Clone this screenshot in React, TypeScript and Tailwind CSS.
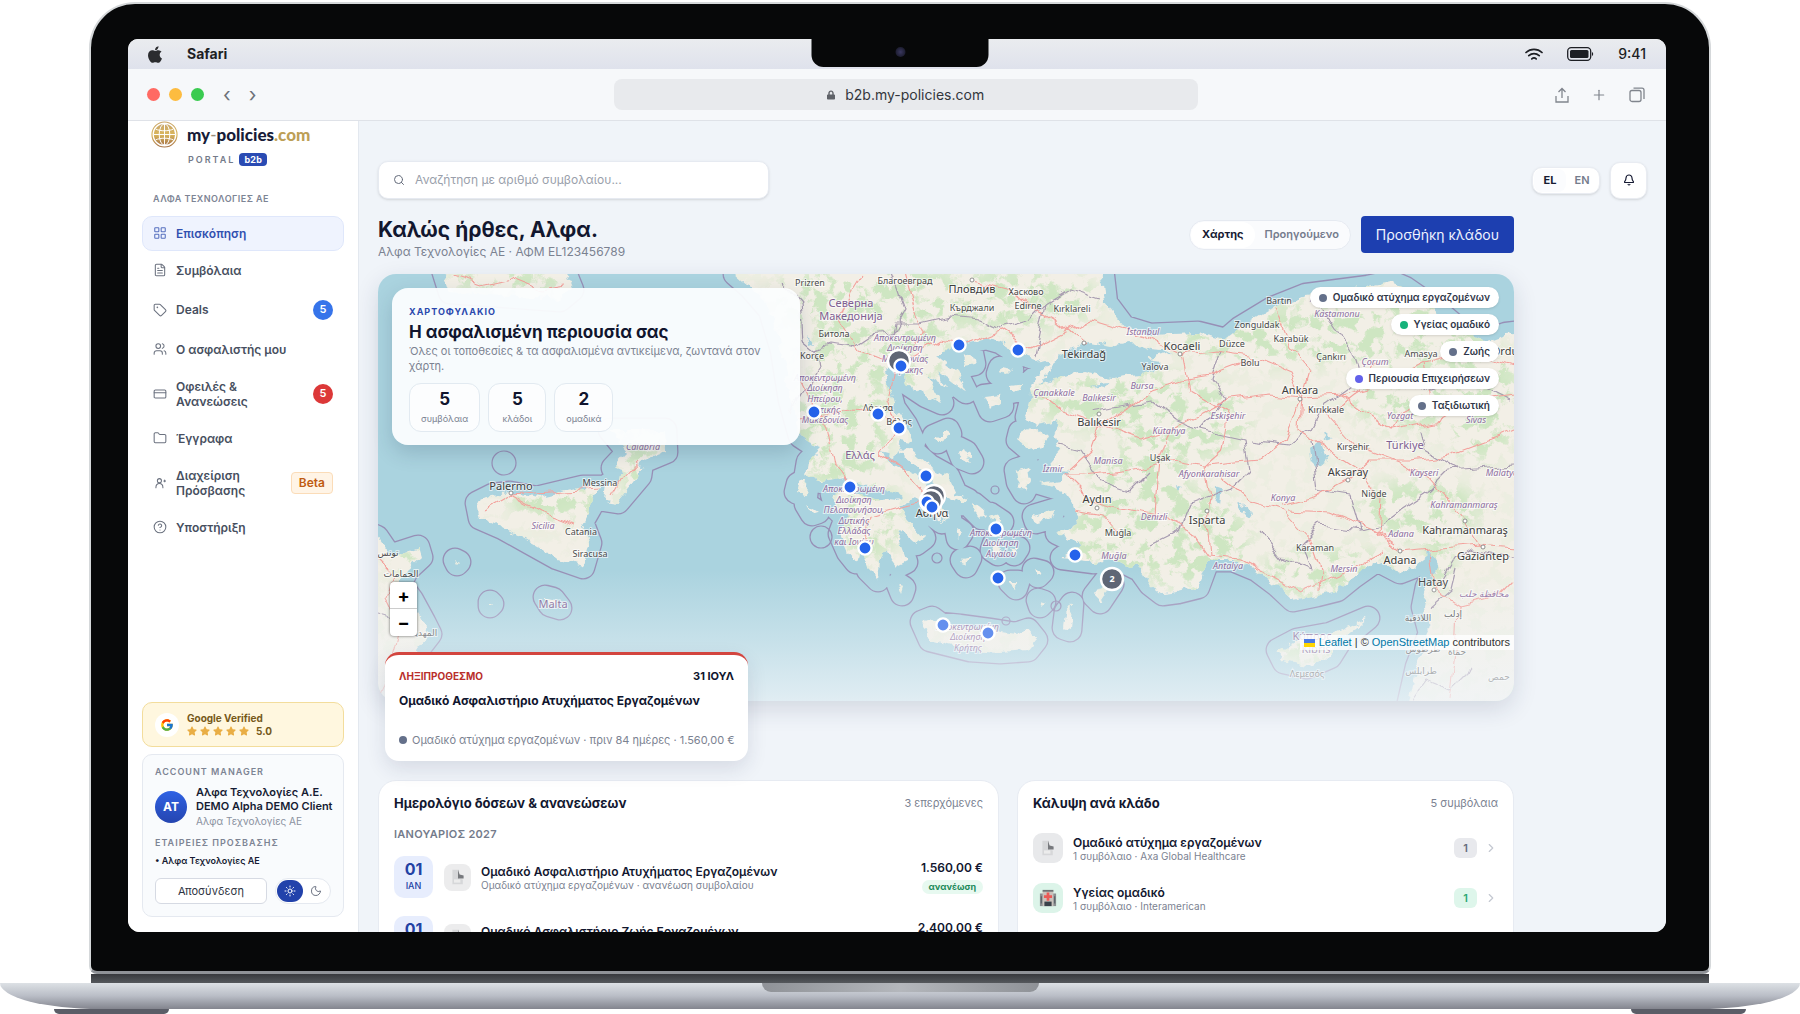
import React from 'react';
import {
  Bell,
  ChevronRight,
  Copy,
  CreditCard,
  FileText,
  Folder,
  HelpCircle,
  LayoutGrid,
  Moon,
  Plus,
  Search,
  Sun,
  Tag,
  Users,
} from 'lucide-react';
import { FaApple, FaLock, FaStar } from 'react-icons/fa';
import { FcGoogle } from 'react-icons/fc';

/* ---------- map data ---------- */

const LAND = [
  // Balkans, Greece mainland and Peloponnese, joined with Anatolia
  'M735 274 L750 287 L770 310 L782 350 L790 400 L800 436 L812 444 L822 448 L808 462 L806 474 L822 482 L846 478 L862 486 L884 492 L900 498 L880 500 L860 494 L846 488 L832 494 L836 508 L846 518 L840 534 L848 552 L856 562 L860 548 L868 570 L878 580 L880 560 L886 550 L898 566 L906 562 L898 540 L900 530 L916 544 L924 538 L906 518 L902 506 L914 498 L926 510 L942 522 L950 518 L940 500 L932 488 L916 476 L904 470 L888 460 L880 452 L896 456 L900 440 L914 442 L906 425 L894 408 L888 385 L886 368 L896 364 L904 372 L908 384 L926 396 L942 403 L932 386 L926 376 L946 388 L938 370 L966 392 L956 372 L936 356 L948 348 L968 342 L986 338 L1000 342 L1016 352 L1040 360 L1048 366 L1030 382 L1032 397 L1027 417 L1034 424 L1058 420 L1054 437 L1060 452 L1047 467 L1067 472 L1062 480 L1040 483 L1063 490 L1073 503 L1077 523 L1057 533 L1082 545 L1062 558 L1093 562 L1120 560 L1140 570 L1150 584 L1163 594 L1178 592 L1198 587 L1208 560 L1233 560 L1257 570 L1277 585 L1293 600 L1317 595 L1337 590 L1353 577 L1377 560 L1400 572 L1413 567 L1430 552 L1438 566 L1427 587 L1423 607 L1430 633 L1417 667 L1405 720 L1540 720 L1540 330 L1506 334 L1484 342 L1460 330 L1434 308 L1405 288 L1391 282 L1368 287 L1306 295 L1273 308 L1240 328 L1226 340 L1198 333 L1150 335 L1124 327 L1106 303 L1100 250 L735 250 Z',
  // Tunisia
  'M360 530 L377 537 L390 556 L418 547 L421 557 L407 570 L400 584 L412 600 L424 622 L430 634 L416 652 L420 680 L400 720 L360 720 Z',
  // Sicily
  'M477 503 L493 495 L510 493 L537 498 L583 487 L601 487 L590 508 L582 522 L590 543 L583 567 L557 558 L530 543 L503 528 L480 518 Z',
  // Calabria and southern Italy
  'M610 430 L665 430 L666 452 L642 462 L640 476 L618 502 L605 500 L607 486 L624 473 L613 468 L628 452 Z',
  'M440 260 L560 260 L572 290 L560 300 L450 292 Z',
  // Malta
  'M545 597 L553 599 L560 608 L550 605 Z',
  // Crete
  'M922 622 L932 618 L940 624 L960 626 L990 630 L1016 634 L1028 630 L1036 640 L1028 650 L1000 652 L970 650 L930 640 Z',
  // Cyprus
  'M1278 650 L1297 640 L1330 634 L1368 618 L1340 641 L1330 657 L1307 667 L1284 662 Z',
  // Evia
  'M898 448 L912 450 L930 466 L948 476 L956 494 L968 500 L962 504 L944 494 L926 474 L904 458 Z',
  // Lesvos, Chios, Limnos, Samos
  'M1020 432 L1034 426 L1048 438 L1044 446 L1030 450 L1018 440 Z',
  'M1016 470 L1028 466 L1030 480 L1024 492 L1018 482 Z',
  'M984 396 L1000 394 L1002 406 L990 410 Z',
  'M1034 516 L1054 510 L1050 518 L1036 522 Z',
  // Thasos, Samothraki, Imbros
  'M962 356 L972 354 L974 364 L964 366 Z',
  'M1000 368 L1012 370 L1006 376 L998 374 Z',
  'M1010 386 L1022 384 L1020 390 L1010 392 Z',
  // Skyros, Sporades, Cyclades
  'M958 448 L966 452 L972 462 L962 458 Z',
  'M934 436 L948 430 L950 434 L938 442 Z',
  'M974 504 L986 514 L982 518 L972 508 Z',
  'M990 514 L1002 522 L998 526 L988 518 Z',
  'M994 544 L1002 546 L998 554 L992 550 Z',
  'M1010 546 L1018 548 L1014 554 Z',
  'M956 528 L962 532 L958 538 Z',
  'M962 560 L970 558 L966 566 Z',
  'M1034 570 L1042 572 L1038 576 Z',
  'M1010 582 L1018 582 L1016 588 Z',
  // Rhodes, Karpathos, Kos
  'M1094 596 L1108 578 L1112 584 L1100 602 Z',
  'M1066 612 L1072 604 L1070 630 L1064 628 Z',
  'M1038 600 L1044 602 L1040 606 Z',
  // Ionian islands, Kythira
  'M798 484 L808 478 L806 496 L796 492 Z',
  'M806 504 L818 512 L812 514 Z',
  'M898 584 L904 588 L902 594 Z',
  'M455 560 L459 562 L457 564 Z',
  'M490 602 L492 604 L490 606 Z',
].join(' ');

const WATER = [
  // Sea of Marmara
  'M1052 364 L1070 348 L1090 342 L1110 346 L1130 342 L1150 350 L1174 352 L1150 358 L1160 370 L1140 374 L1112 378 L1084 372 L1054 378 L1040 384 Z',
  // Gulf of Corinth
  'M838 483 L856 486 L880 488 L902 496 L898 500 L878 498 L856 492 Z',
  // lakes
  'M1310 450 L1320 442 L1326 462 L1318 468 L1312 462 Z',
  'M1216 486 L1222 488 L1220 504 L1216 498 Z',
  'M1240 502 L1252 512 L1248 518 L1242 510 Z',
  'M1324 432 L1332 438 L1326 440 Z',
  'M806 334 L814 346 L808 348 Z',
  'M1176 486 L1184 488 L1178 492 Z',
  'M1090 384 L1108 382 L1104 388 Z',
].join(' ');

const ROADS = [
  'M900 364 L940 340 L965 344 L1000 330 L1030 350 L1060 335 L1090 320 L1146 337 L1183 355 L1215 350 L1250 355 L1290 372 L1302 398 L1340 396 L1380 385 L1424 362 L1470 350 L1514 365',
  'M1302 398 L1285 440 L1260 460 L1205 465 L1175 460 L1130 470 L1085 475 L1065 475',
  'M1302 398 L1300 430 L1330 450 L1360 470 L1380 500 L1378 535 L1400 552 L1440 548 L1480 545 L1514 548',
  'M1065 475 L1090 500 L1120 508 L1160 515 L1190 530 L1207 555 L1240 558 L1270 575 L1300 592 L1350 570 L1385 552',
  'M895 368 L888 400 L898 425 L880 455 L915 480 L932 500 L905 505 L870 515 L862 545',
  'M850 487 L835 465 L828 430 L815 410 L800 380',
  'M800 418 L850 412 L878 414 L898 425',
  'M895 364 L860 350 L840 320 L850 290 L860 274',
  'M905 274 L915 310 L925 335 L900 362',
  'M972 280 L1010 290 L1028 305 L1055 320 L1085 345',
  'M1040 394 L1060 410 L1099 425 L1130 405 L1150 390 L1180 380 L1210 375 L1250 360',
  'M1099 425 L1090 450 L1068 470',
  'M1099 425 L1140 440 L1170 430 L1228 400 L1270 395 L1302 398',
  'M1205 465 L1210 500 L1207 520 L1210 555',
  'M1283 510 L1250 500 L1220 475',
  'M1283 510 L1310 540 L1320 570 L1318 592',
  'M1283 505 L1320 495 L1348 480 L1370 460 L1410 460 L1450 455 L1490 440 L1514 430',
  'M1288 510 L1330 512 L1370 528 L1395 545',
  'M1328 415 L1355 445 L1400 462 L1430 480 L1465 520 L1480 545',
  'M1340 396 L1390 430 L1440 420 L1476 400 L1514 395',
  'M1430 552 L1435 590 L1458 605 L1456 650 L1450 701',
  'M1458 605 L1500 595 L1514 580',
  'M1276 310 L1290 345 L1310 370 L1302 398',
  'M1183 355 L1190 390 L1228 412 L1222 450 L1205 465',
  'M1375 362 L1360 390 L1328 415',
  'M1424 362 L1430 400 L1400 415 L1390 430',
  'M1118 536 L1100 515 L1075 510',
  'M1170 430 L1160 460 L1155 515',
  'M510 495 L540 512 L575 525',
  'M484 510 L510 495 L550 492 L600 489',
  'M640 460 L622 480 L612 498',
  'M377 560 L392 575 L385 600 L400 630 L392 660 L380 700',
  'M452 276 L480 285 L510 278 L540 290 L566 286',
];

const BORDERS = [
  'M782 280 L800 300 L803 340 L815 350 L830 345 L852 348 L870 336 L892 334 L894 322 L920 322 L950 315 L980 318 L1000 328 L1030 320 L1045 305 L1070 290 L1100 300',
  'M892 334 L905 310 L898 290 L892 274',
  'M815 350 L818 370 L800 395 L792 410',
  'M1045 305 L1040 330 L1034 358',
  'M1220 350 L1210 380 L1225 400 L1200 430 L1175 420 L1150 400 L1120 405 L1090 410',
  'M1200 430 L1245 440 L1250 470 L1230 490 L1190 505 L1180 530 L1150 545',
  'M1250 440 L1290 445 L1312 430 L1325 405 L1360 380 L1350 350 L1330 320 L1310 300',
  'M1360 380 L1390 375 L1430 390 L1470 380 L1510 400',
  'M1312 440 L1318 490 L1350 495 L1360 530 L1380 525 L1400 510 L1430 490 L1450 470 L1514 465',
  'M1260 530 L1285 560 L1310 570 L1300 545 L1320 525 L1360 530',
  'M1440 585 L1455 560 L1470 550 L1514 558',
  'M1430 607 L1450 590 L1455 570',
  'M1150 470 L1130 490 L1100 480 L1080 450 L1060 445',
  'M1420 430 L1425 450 L1460 470',
  'M377 615 L395 620 L405 600',
  'M1410 701 L1425 680 L1450 690 L1470 670',
];

// t = town, c = city, r = region (italic), n = country
type LabelKind = 't' | 'c' | 'r' | 'n';
const LABELS: [string, number, number, LabelKind][] = [
  ['Prizren', 810, 286, 't'], ['Благоевград', 905, 284, 't'], ['Пловдив', 972, 293, 'c'],
  ['Хасково', 1026, 295, 't'], ['Северна', 851, 307, 'n'], ['Македонија', 851, 320, 'n'],
  ['Кърджали', 972, 311, 't'], ['Edirne', 1028, 309, 't'], ['Kırklareli', 1072, 312, 't'],
  ['Битола', 834, 337, 't'], ['Αποκεντρωμένη', 905, 341, 'r'], ['Διοίκηση', 905, 351, 'r'],
  ['Μακεδονίας', 905, 362, 'r'], ['Θράκης', 908, 373, 'r'], ['İstanbul', 1143, 335, 'r'],
  ['Korçe', 812, 359, 't'], ['Tekirdağ', 1084, 358, 'c'], ['Kocaeli', 1182, 350, 'c'],
  ['Yalova', 1155, 370, 't'], ['Αποκεντρωμένη', 825, 381, 'r'], ['Διοίκηση', 825, 391, 'r'],
  ['Ηπείρου,', 825, 402, 'r'], ['Δυτικής', 825, 413, 'r'], ['Μακεδονίας', 825, 423, 'r'],
  ['Bursa', 1142, 389, 'r'], ['Çanakkale', 1054, 396, 'r'], ['Balıkesir', 1099, 401, 'r'],
  ['Balıkesir', 1099, 426, 'c'], ['Λάρισα', 878, 411, 't'], ['Βόλος', 899, 425, 't'],
  ['Kütahya', 1169, 434, 'r'], ['Ελλάς', 860, 459, 'n'], ['Manisa', 1108, 464, 'r'],
  ['Uşak', 1160, 461, 't'], ['İzmir', 1053, 472, 'r'], ['Αποκεντρωμένη', 854, 492, 'r'],
  ['Διοίκηση', 854, 503, 'r'], ['Πελοποννήσου,', 854, 513, 'r'], ['Δυτικής', 854, 524, 'r'],
  ['Ελλάδας', 854, 534, 'r'], ['και Ιονίου', 854, 545, 'r'], ['Aydın', 1097, 503, 'c'],
  ['Αθήνα', 932, 517, 'c'], ['Denizli', 1154, 520, 'r'], ['Muğla', 1118, 536, 't'],
  ['Muğla', 1114, 559, 'r'], ['Αποκεντρωμένη', 1001, 536, 'r'], ['Διοίκηση', 1001, 546, 'r'],
  ['Αιγαίου', 1001, 557, 'r'], ['Αποκεντρωμένη', 968, 630, 'r'], ['Διοίκηση', 968, 640, 'r'],
  ['Κρήτης', 968, 651, 'r'], ['Bartın', 1279, 304, 't'], ['Kastamonu', 1337, 317, 'r'],
  ['Zonguldak', 1257, 328, 't'], ['Karabük', 1291, 342, 't'], ['Düzce', 1232, 347, 't'],
  ['Bolu', 1250, 366, 't'], ['Çankırı', 1331, 360, 't'], ['Çorum', 1375, 365, 'r'],
  ['Amasya', 1421, 357, 't'], ['Ordu', 1505, 355, 'c'], ['Ankara', 1300, 394, 'c'],
  ['Kırıkkale', 1326, 413, 't'], ['Eskişehir', 1228, 419, 'r'], ['Yozgat', 1400, 419, 'r'],
  ['Sivas', 1476, 423, 'r'], ['Kırşehir', 1353, 450, 't'], ['Türkiye', 1405, 449, 'n'],
  ['Aksaray', 1348, 476, 'c'], ['Afyonkarahisar', 1209, 477, 'r'], ['Kayseri', 1424, 476, 'r'],
  ['Malatya', 1502, 476, 'r'], ['Niğde', 1374, 497, 't'], ['Konya', 1283, 501, 'r'],
  ['Kahramanmaraş', 1464, 508, 'r'], ['Isparta', 1207, 524, 'c'], ['Adana', 1401, 537, 'r'],
  ['Kahramanmaraş', 1465, 534, 'c'], ['Gaziantep', 1483, 560, 'c'], ['Karaman', 1315, 551, 't'],
  ['Adana', 1400, 564, 'c'], ['Antalya', 1228, 569, 'r'], ['Mersin', 1344, 572, 'r'],
  ['Hatay', 1433, 586, 'c'], ['محافظة حلب', 1484, 597, 'r'], ['إدلب', 1453, 617, 't'],
  ['اللاذقية', 1418, 621, 't'], ['طرطوس', 1423, 652, 't'], ['حماة', 1457, 655, 't'],
  ['طرابلس', 1421, 674, 't'], ['حمص', 1499, 680, 't'], ['Κύπρος', 1312, 640, 'n'],
  ['Kıbrıs', 1316, 653, 'n'], ['Λεμεσός', 1307, 677, 't'], ['Palermo', 511, 490, 'c'],
  ['Messina', 600, 486, 't'], ['Calabria', 643, 450, 'r'], ['Sicilia', 543, 529, 'r'],
  ['Catania', 581, 535, 't'], ['Siracusa', 590, 557, 't'], ['Malta', 553, 608, 'n'],
  ['تونس', 388, 556, 't'], ['الحمامات', 401, 577, 't'], ['المهدية', 424, 636, 't'],
];

const labelStyle: Record<LabelKind, string> = {
  t: 'fill-[#4a4a4a] text-[9px]',
  c: 'fill-[#3d3d3d] text-[11px]',
  r: 'fill-[#8d6ea0] text-[9px] italic',
  n: 'fill-[#7f5f92] text-[11px]',
};

// greener areas: cx, cy, rx, ry
const FORESTS = [
  [880, 300, 110, 36], [1010, 300, 90, 30], [880, 350, 70, 40], [840, 430, 50, 60],
  [870, 520, 30, 40], [1280, 335, 110, 30], [1120, 400, 90, 30], [1180, 420, 70, 40],
  [1190, 540, 60, 50], [1115, 540, 50, 40], [1330, 575, 70, 26], [1420, 510, 60, 30],
  [1400, 330, 80, 40], [1410, 400, 60, 30], [1140, 480, 50, 30], [560, 500, 50, 20],
  [640, 470, 20, 30], [510, 280, 60, 16], [1440, 560, 14, 30], [1310, 650, 30, 12],
  [1480, 400, 40, 60], [410, 560, 14, 20],
];

const TOWN_DOTS = [
  [972, 280], [1084, 343], [1180, 354], [1099, 414], [1097, 508], [1348, 480], [1207, 511],
  [1400, 551], [1465, 521], [1483, 547], [1434, 590], [511, 493], [1300, 399],
];

const PINS = [
  [959, 345], [1018, 350], [814, 412], [878, 414], [899, 428], [926, 476], [850, 487],
  [865, 548], [996, 529], [998, 578], [1075, 555],
];

const WorldMap = () => (
  <svg
    className="absolute inset-0 h-full w-full font-['Noto_Sans','DejaVu_Sans',sans-serif]"
    viewBox="378 274 1136 427"
    preserveAspectRatio="xMidYMid slice"
    role="img"
    aria-label="Χάρτης"
  >
    <defs>
      <filter id="rough" x="0" y="0" width="1" height="1">
        <feTurbulence type="fractalNoise" baseFrequency="0.09" numOctaves="3" seed="4" result="n" />
        <feDisplacementMap in="SourceGraphic" in2="n" scale="11" xChannelSelector="R" yChannelSelector="G" />
      </filter>
      <filter id="wavy" x="0" y="0" width="1" height="1">
        <feTurbulence type="fractalNoise" baseFrequency="0.045" numOctaves="2" seed="7" result="n" />
        <feDisplacementMap in="SourceGraphic" in2="n" scale="14" xChannelSelector="R" yChannelSelector="G" />
      </filter>
      <filter id="wood" x="0" y="0" width="1" height="1">
        <feTurbulence type="fractalNoise" baseFrequency="0.07" numOctaves="4" seed="11" />
        <feColorMatrix values="0 0 0 0 0.62  0 0 0 0 0.79  0 0 0 0 0.54  9 0 0 0 -4.4" />
      </filter>
      <filter id="soft"><feGaussianBlur stdDeviation="8" /></filter>
      <clipPath id="land"><path d={LAND} /></clipPath>
      <mask id="forests" maskUnits="userSpaceOnUse" x="370" y="260" width="1160" height="450">
        <rect x="370" y="260" width="1160" height="450" fill="#222" />
        <g filter="url(#soft)" fill="#fff">
          {FORESTS.map(([cx, cy, rx, ry], i) => <ellipse key={i} cx={cx} cy={cy} rx={rx} ry={ry} />)}
        </g>
      </mask>
      <linearGradient id="fade" x1="0" y1="0" x2="0" y2="1">
        <stop offset="0" stopColor="#f1f5f9" stopOpacity="0" />
        <stop offset="0.55" stopColor="#f1f5f9" stopOpacity="0.44" />
        <stop offset="1" stopColor="#f1f5f9" stopOpacity="0.82" />
      </linearGradient>
    </defs>
    <rect x="0" y="0" width="2000" height="1014" fill="#aad3df" />
    {/* territorial waters: a wide outline with a slightly narrower one on top */}
    <g fill="none" strokeLinejoin="round">
      <path d={LAND} stroke="#978fb6" strokeWidth="25" />
      <path d={LAND} stroke="#aad3df" strokeWidth="22.4" />
    </g>
    <g filter="url(#rough)">
      <path d="M340 240 H1560 V740 H340 Z" fill="none" />
      <path d={LAND} fill="#f2efe6" />
      <g clipPath="url(#land)">
        <g mask="url(#forests)">
          <rect x="370" y="260" width="1160" height="450" filter="url(#wood)" />
        </g>
      </g>
      <path d={WATER} fill="#aad3df" />
    </g>
    <g filter="url(#wavy)" fill="none" strokeLinejoin="round">
      <path d="M340 240 H1560 V740 H340 Z" />
      {BORDERS.map((d, i) => <path key={i} d={d} stroke="#a79bb0" strokeWidth="1.2" />)}
      {ROADS.map((d, i) => <path key={i} d={d} stroke="#f3a19c" strokeWidth="1.1" />)}
    </g>
    <g fill="none" stroke="#978fb6" strokeWidth="1.2">
      <circle cx="504" cy="463" r="12" />
      <circle cx="821" cy="537" r="11" />
      <circle cx="995" cy="490" r="4" />
      <circle cx="1056" cy="606" r="5" />
      <circle cx="1006" cy="621" r="4" />
      <circle cx="937" cy="558" r="5" />
    </g>
    {LABELS.map(([text, x, y, kind], i) => (
      <text
        key={i}
        x={x}
        y={y}
        textAnchor="middle"
        stroke="#ffffff"
        strokeOpacity="0.65"
        strokeWidth="2"
        paintOrder="stroke"
        className={labelStyle[kind]}
      >
        {text}
      </text>
    ))}
    {TOWN_DOTS.map(([cx, cy]) => (
      <circle key={`${cx}-${cy}`} cx={cx} cy={cy} r="2" fill="#fff" stroke="#777" strokeWidth="0.8" />
    ))}
    <rect x="370" y="570" width="1160" height="140" fill="url(#fade)" />
    <g stroke="#fff" strokeWidth="2.4">
      {[[899, 361], [934, 496], [931, 501], [1112, 579]].map(([cx, cy]) => (
        <circle key={cx} cx={cx} cy={cy} r="11" fill="#5f6675" />
      ))}
      {PINS.map(([cx, cy]) => <circle key={`${cx}-${cy}`} cx={cx} cy={cy} r="6.6" fill="#2563eb" />)}
      <circle cx="927" cy="502" r="6.6" fill="#2563eb" />
      <circle cx="932" cy="507" r="6.6" fill="#2563eb" />
      <circle cx="901" cy="366" r="6.6" fill="#2563eb" />
      <circle cx="943" cy="625" r="6.6" fill="#648fee" />
      <circle cx="988" cy="633" r="6.6" fill="#648fee" />
    </g>
    <text x="1112" y="582" textAnchor="middle" className="fill-white text-[9px] font-bold">2</text>
  </svg>
);

/* ---------- small drawings ---------- */

const Globe = () => (
  <svg viewBox="0 0 28 28" className="h-[27px] w-[27px] shrink-0" fill="none" aria-hidden="true">
    <defs>
      <linearGradient id="gold" x1="0" y1="0" x2="0" y2="1">
        <stop offset="0" stopColor="#c9a56a" />
        <stop offset="0.5" stopColor="#d9b65c" />
        <stop offset="1" stopColor="#a9764a" />
      </linearGradient>
    </defs>
    <circle cx="14" cy="14" r="13" stroke="url(#gold)" strokeWidth="1.2" />
    <circle cx="14" cy="14" r="11" fill="url(#gold)" />
    <g stroke="#fff" strokeWidth="1">
      <ellipse cx="14" cy="14" rx="5.5" ry="11" />
      <path d="M14 3v22M3 14h22M5 8.5c5 2.2 13 2.2 18 0M5 19.5c5-2.2 13-2.2 18 0" />
    </g>
  </svg>
);

const AccessIcon = ({ className }: { className?: string }) => (
  <svg viewBox="0 0 24 24" className={className} fill="none" stroke="currentColor" strokeWidth="1.8" strokeLinecap="round">
    <circle cx="11" cy="8" r="3.5" />
    <path d="M5 20c0-4.500 2.500-7 6-7s6 2.500 6 7M20 7v3M18.500 8.500h3" />
  </svg>
);

const SeatIcon = () => (
  <svg viewBox="0 0 16 20" className="h-4 w-3.5" aria-hidden="true">
    <path d="M1 1h8v11l5 1v6H1z" fill="#d6d7d9" />
    <path d="M8 1l2 6 5 1v4H8z" fill="#77797d" />
    <path d="M3 13h8v4H3z" fill="#ececec" />
  </svg>
);

const HospitalIcon = () => (
  <svg viewBox="0 0 20 20" className="h-[18px] w-[18px]" aria-hidden="true">
    <path d="M1 5h18v14H1z" fill="#8a8f91" />
    <path d="M4 2h12v17H4z" fill="#c9c3bd" />
    <path d="M4 1h12v2H4z" fill="#6e7274" />
    <path d="M6 14h8v5H6z" fill="#39424a" />
    <path d="M8.500 4h3v3h3v3h-3v3h-3v-3h-3V7h3z" fill="#ea5a56" />
    <path d="M2 8h1v8H2zM17 8h1v8h-1z" fill="#4d565c" />
  </svg>
);

/* ---------- browser chrome ---------- */

const MenuBar = () => (
  <div className="flex h-[30px] shrink-0 items-center justify-between bg-linear-to-b from-[#eaecef] to-[#dfe2ec] pl-[19px] pr-5 text-[#1d1f24]">
    <div className="flex items-center gap-6">
      <FaApple className="h-[19px] w-4 text-[#2b2c2f]" />
      <span className="text-sm font-bold">Safari</span>
    </div>
    <div className="flex items-center gap-6">
      <svg viewBox="0 0 18 13" className="h-[13px] w-[18px]" fill="none" stroke="currentColor" strokeWidth="1.700" strokeLinecap="round">
        <path d="M1 4.500c4.500-4.300 11.500-4.300 16 0M3.800 7.700c3-2.800 7.400-2.800 10.400 0M6.800 10.900c1.300-1.100 3.100-1.100 4.400 0" />
      </svg>
      <svg viewBox="0 0 27 14" className="h-3.5 w-[27px]">
        <rect x="0.700" y="0.700" width="23" height="12.600" rx="3.500" fill="none" stroke="currentColor" strokeWidth="1.300" />
        <rect x="3" y="3" width="18.500" height="8" rx="1.500" fill="currentColor" />
        <path d="M25 5v4c1.600-.5 1.600-3.500 0-4z" fill="currentColor" />
      </svg>
      <span className="text-sm font-medium">9:41</span>
    </div>
  </div>
);

const Toolbar = () => (
  <div className="flex h-[52px] shrink-0 items-center justify-between border-b border-[#dfe2e8] bg-[#f6f8fa] pl-[19px] pr-[21px]">
    <div className="flex items-center gap-[9px]">
      <span className="h-[13px] w-[13px] rounded-full bg-[#ff6a63]" />
      <span className="h-[13px] w-[13px] rounded-full bg-[#fdbc40]" />
      <span className="h-[13px] w-[13px] rounded-full bg-[#3acb50]" />
      <div className="ml-2.5 flex gap-[18px] text-xl leading-none text-[#6d7178]">
        <button type="button" aria-label="Πίσω">‹</button>
        <button type="button" aria-label="Εμπρός">›</button>
      </div>
    </div>
    <div className="flex h-[31px] w-[39%] items-center justify-center gap-2.5 rounded-lg bg-[#e8eaed] text-sm text-[#33363c]">
      <FaLock className="h-3 w-2 text-[#5f6268]" />
      <span>b2b.my-policies.com</span>
    </div>
    <div className="flex items-center gap-[22px] text-[#80858d]">
      <svg viewBox="0 0 14 16" className="h-4 w-3.5" fill="none" stroke="currentColor" strokeWidth="1.300">
        <path d="M1 9v6h12V9M7 11V1.500M3.500 5L7 1.500 10.500 5" />
      </svg>
      <Plus className="h-4 w-4" strokeWidth={1.8} />
      <svg viewBox="0 0 16 16" className="h-4 w-4" fill="none" stroke="currentColor" strokeWidth="1.300">
        <rect x="1" y="3.500" width="11" height="11" rx="2" />
        <path d="M4.500 1.200H13a2 2 0 0 1 2 2V12" />
      </svg>
    </div>
  </div>
);

/* ---------- sidebar ---------- */

interface NavItem {
  label: string;
  icon: React.ElementType;
  active?: boolean;
  badge?: string;
  badgeClass?: string;
}

const navItems: NavItem[] = [
  { label: 'Επισκόπηση', icon: LayoutGrid, active: true },
  { label: 'Συμβόλαια', icon: FileText },
  { label: 'Deals', icon: Tag, badge: '5', badgeClass: 'h-5 w-5 rounded-full bg-[#3674ea] text-[11px] text-white' },
  { label: 'Ο ασφαλιστής μου', icon: Users },
  { label: 'Οφειλές & Ανανεώσεις', icon: CreditCard, badge: '5', badgeClass: 'h-5 w-5 rounded-full bg-[#dc3838] text-[11px] text-white' },
  { label: 'Έγγραφα', icon: Folder },
  { label: 'Διαχείριση Πρόσβασης', icon: AccessIcon, badge: 'Beta', badgeClass: 'h-[22px] px-[7px] rounded-sm border border-[#fbdcb8] bg-[#fff4e6] text-xs text-[#bf5b12]' },
  { label: 'Υποστήριξη', icon: HelpCircle },
];

const Sidebar = () => (
  <aside className="flex w-[231px] shrink-0 flex-col border-r border-[#e3e8ef] bg-white px-3.5 pb-[15px]">
    <div className="flex items-center gap-[9px] pl-[9px]">
      <Globe />
      <span className="font-['Lato',sans-serif] text-[17px] leading-[26px] font-black text-[#171c38]">
        my<span className="font-medium text-[#9a8f78]">-</span>policies<span className="text-[#bd9f57]">.com</span>
      </span>
    </div>
    <div className="mt-[5px] flex items-center gap-1 pl-[46px]">
      <span className="text-[9px] font-semibold tracking-[2px] text-[#747b8a]">PORTAL</span>
      <span className="rounded-sm bg-[#2a4bb3] px-[5px] text-[9px] leading-[13px] font-bold tracking-wide text-white">b2b</span>
    </div>
    <p className="mt-[25px] pl-[11px] text-[9px] leading-[14px] font-semibold tracking-wider text-[#7d8494]">ΑΛΦΑ ΤΕΧΝΟΛΟΓΙΕΣ ΑΕ</p>
    <nav className="mt-2.5 flex flex-col gap-0.5">
      {navItems.map(({ label, icon: Icon, active, badge, badgeClass }) => (
        <a
          key={label}
          href="#"
          className={`flex items-center gap-[9px] rounded-[10px] border px-2.5 py-[9px] text-xs leading-[15px] font-semibold ${
            active ? 'border-[#dfe7fb] bg-[#eff3fe] text-[#3150b0]' : 'border-transparent text-[#474f60]'
          }`}
        >
          <Icon className="h-3.5 w-3.5 shrink-0 opacity-80" strokeWidth={1.8} />
          <span className="w-[90px] flex-auto">{label}</span>
          {badge && <span className={`flex shrink-0 items-center justify-center font-semibold ${badgeClass}`}>{badge}</span>}
        </a>
      ))}
    </nav>

    <div className="mt-auto flex h-[45px] shrink-0 items-center gap-2 rounded-[10px] border border-[#f3dd9c] bg-[#fff7df] pl-3 text-[10px] text-[#76591a]">
      <span className="flex h-6 w-6 items-center justify-center rounded-full bg-white">
        <FcGoogle className="h-3.5 w-3.5" />
      </span>
      <div className="leading-[13px] font-bold">
        <p>Google Verified</p>
        <p className="flex items-center gap-[3px]">
          {[0, 1, 2, 3, 4].map((i) => <FaStar key={i} className="h-2.5 w-2.5 text-[#e9ae45]" />)}
          <span className="ml-1">5.0</span>
        </p>
      </div>
    </div>

    <section className="mt-[7px] flex shrink-0 flex-col rounded-[10px] border border-[#e5e9f0] bg-[#f9fbfd] px-3 pt-2.5 pb-3">
      <h2 className="text-[9px] leading-[14px] font-semibold tracking-[1px] text-[#7d8494]">ACCOUNT MANAGER</h2>
      <div className="mt-1.5 flex items-center gap-[9px]">
        <span className="flex h-8 w-8 shrink-0 items-center justify-center rounded-full bg-linear-to-b from-[#2f62e4] to-[#2545b0] text-xs font-bold text-white">AT</span>
        <div className="text-[11px] whitespace-nowrap">
          <p className="leading-[14px] font-semibold text-[#161b33]">Αλφα Τεχνολογίες Α.Ε.<br />DEMO Alpha DEMO Client</p>
          <p className="mt-px text-[10px] leading-[15px] text-[#8a91a0]">Αλφα Τεχνολογίες ΑΕ</p>
        </div>
      </div>
      <h2 className="mt-[7px] text-[9px] leading-[14px] font-semibold tracking-[1px] text-[#7d8494]">ΕΤΑΙΡΕΙΕΣ ΠΡΟΣΒΑΣΗΣ</h2>
      <p className="mt-1 text-[9px] leading-[14px] font-semibold text-[#161b33]">• Αλφα Τεχνολογίες ΑΕ</p>
      <div className="mt-2.5 flex items-center gap-2">
        <button type="button" className="h-[26px] flex-1 rounded-md border border-[#d6dae3] bg-white text-[11px] text-[#2d3342]">Αποσύνδεση</button>
        <div className="flex h-[26px] items-center rounded-full border border-[#e5e9f0] bg-white px-px">
          <button type="button" aria-label="Φωτεινό" className="flex h-[22px] w-[26px] items-center justify-center rounded-full bg-[#2242ab] text-white">
            <Sun className="h-3 w-3" />
          </button>
          <button type="button" aria-label="Σκούρο" className="flex h-[22px] w-[26px] items-center justify-center text-[#6d7484]">
            <Moon className="h-3 w-3" />
          </button>
        </div>
      </div>
    </section>
  </aside>
);

/* ---------- dashboard ---------- */

const stats = [
  { value: '5', label: 'συμβόλαια' },
  { value: '5', label: 'κλάδοι' },
  { value: '2', label: 'ομαδικά' },
];

const legend = [
  { label: 'Ομαδικό ατύχημα εργαζομένων', dot: 'bg-[#64708a]' },
  { label: 'Υγείας ομαδικό', dot: 'bg-[#16b27a]' },
  { label: 'Ζωής', dot: 'bg-[#64708a]' },
  { label: 'Περιουσία Επιχειρήσεων', dot: 'bg-[#6261ea]' },
  { label: 'Ταξιδιωτική', dot: 'bg-[#64708a]' },
];

const payments = [
  { title: 'Ομαδικό Ασφαλιστήριο Ατυχήματος Εργαζομένων', sub: 'Ομαδικό ατύχημα εργαζομένων · ανανέωση συμβολαίου', amount: '1.560,00 €' },
  { title: 'Ομαδικό Ασφαλιστήριο Ζωής Εργαζομένων', sub: 'Ζωής · ανανέωση συμβολαίου', amount: '2.400,00 €' },
];

const branches = [
  { title: 'Ομαδικό ατύχημα εργαζομένων', sub: '1 συμβόλαιο · Axa Global Healthcare', icon: SeatIcon, tile: 'bg-[#e8e9eb]', count: 'bg-[#e8e9ed] text-[#666d7c]' },
  { title: 'Υγείας ομαδικό', sub: '1 συμβόλαιο · Interamerican', icon: HospitalIcon, tile: 'bg-[#dcf4e9]', count: 'bg-[#def6eb] text-[#2ba673]' },
];

const MapPanel = () => (
  <section className="relative mt-3.5 h-[427px]">
    <div className="absolute inset-0 overflow-hidden rounded-[18px] shadow-[0_8px_24px_rgba(30,41,80,0.14)]">
      <WorldMap />
    </div>

    <div className="absolute left-3.5 top-3.5 w-[408px] rounded-2xl bg-[#fbfdfe]/95 px-[17px] pt-4 pb-[13px] shadow-[0_8px_20px_rgba(30,50,80,0.18)]">
      <p className="text-[9px] leading-4 font-bold tracking-[1px] text-[#2a48ad]">ΧΑΡΤΟΦΥΛΑΚΙΟ</p>
      <h2 className="text-[17px] leading-6 font-bold text-[#10152e]">Η ασφαλισμένη περιουσία σας</h2>
      <p className="text-[11px] leading-[15px] text-[#7b8291]">Όλες οι τοποθεσίες &amp; τα ασφαλισμένα αντικείμενα, ζωντανά στον χάρτη.</p>
      <div className="mt-[9px] flex gap-2">
        {stats.map((s) => (
          <div key={s.label} className="min-w-[58px] rounded-xl border border-[#e2eaf1] bg-white/60 px-[11px] pt-[5px] pb-1.5 text-center">
            <p className="text-[17px] leading-5 font-bold text-[#10152e]">{s.value}</p>
            <p className="mt-1 text-[9px] leading-3 text-[#7b8291]">{s.label}</p>
          </div>
        ))}
      </div>
    </div>

    <ul className="absolute right-[15px] top-[13px] flex flex-col items-end gap-1.5">
      {legend.map((l) => (
        <li key={l.label} className="flex h-[21px] items-center gap-1.5 rounded-full bg-white px-[9px] text-[10px] font-semibold text-[#2f3648] shadow-sm">
          <span className={`h-2 w-2 rounded-full ${l.dot}`} />
          {l.label}
        </li>
      ))}
    </ul>

    <div className="absolute left-3 top-[308px] flex w-[27px] flex-col rounded-sm bg-white text-center text-lg font-bold text-black shadow-[0_0_3px_rgba(0,0,0,0.6)]">
      <button type="button" aria-label="Μεγέθυνση" className="h-[27px] border-b border-[#ccc] leading-[27px]">+</button>
      <button type="button" aria-label="Σμίκρυνση" className="h-[27px] leading-[27px]">−</button>
    </div>

    <p className="absolute right-0 bottom-[51px] flex h-[15px] items-center gap-1 bg-white/80 px-1 font-['Liberation_Sans',sans-serif] text-[11px] text-[#333]">
      <span className="flex h-2 w-[11px] flex-col"><span className="h-1 bg-[#4c7be1]" /><span className="h-1 bg-[#ffd500]" /></span>
      <span>
        <a href="#" className="text-[#0078a8]">Leaflet</a> | © <a href="#" className="text-[#0078a8]">OpenStreetMap</a> contributors
      </span>
    </p>

    <article className="absolute left-[7px] top-[378px] h-[109px] w-[363px] rounded-[14px] border-t-[3px] border-[#d3453f] bg-white px-3.5 pt-[13px] shadow-[0_8px_20px_rgba(30,41,80,0.12)]">
      <div className="flex items-center justify-between leading-4 font-bold">
        <span className="text-[10px] text-[#b92f2b]">ΛΗΞΙΠΡΟΘΕΣΜΟ</span>
        <span className="text-[11px] text-[#10152e]">31 ΙΟΥΛ</span>
      </div>
      <h3 className="mt-[9px] text-xs leading-4 font-bold text-[#10152e]">Ομαδικό Ασφαλιστήριο Ατυχήματος Εργαζομένων</h3>
      <p className="mt-[23px] flex items-center gap-[5px] text-[11px] leading-4 whitespace-nowrap text-[#7b8291]">
        <span className="h-2 w-2 shrink-0 rounded-full bg-[#64708a]" />
        Ομαδικό ατύχημα εργαζομένων · πριν 84 ημέρες · 1.560,00 €
      </p>
    </article>
  </section>
);

const cardClass = 'rounded-[18px] border border-[#e7ebf2] bg-white px-[15px] pt-[13px] pb-6';

const Dashboard = () => (
  <main className="min-w-0 flex-1 overflow-hidden bg-[#f0f4f9] px-[19px] pt-10">
    <div className="flex items-center justify-between">
      <label className="flex h-[38px] w-[391px] items-center gap-2.5 rounded-[10px] border border-[#e6eaf1] bg-white px-3.5 shadow-sm">
        <Search className="h-3 w-3 text-[#646b7a]" />
        <input
          type="search"
          aria-label="Αναζήτηση"
          placeholder="Αναζήτηση με αριθμό συμβολαίου..."
          className="min-w-0 flex-1 text-xs outline-none placeholder:text-[#9a9fab]"
        />
      </label>
      <div className="flex items-center gap-2.5">
        <div className="flex h-[27px] items-center rounded-[10px] border border-[#e9ecf2] bg-white px-px text-[11px] font-bold shadow-sm">
          <button type="button" className="h-[23px] w-8 rounded-lg bg-[#fbfcfe] text-[#161b33]">EL</button>
          <button type="button" className="h-[23px] w-8 font-semibold text-[#757c8d]">EN</button>
        </div>
        <button type="button" aria-label="Ειδοποιήσεις" className="flex h-[37px] w-[37px] items-center justify-center rounded-[10px] border border-[#e9ecf2] bg-white shadow-sm">
          <Bell className="h-3 w-3 text-[#161b33]" strokeWidth={2.4} />
        </button>
      </div>
    </div>

    <div className="max-w-[1136px]">
      <header className="mt-4 flex items-start justify-between">
        <div>
          <h1 className="text-[21px] leading-[29px] font-bold text-[#12172f]">Καλώς ήρθες, Αλφα.</h1>
          <p className="text-xs leading-4 text-[#7b8291]">Αλφα Τεχνολογίες ΑΕ · ΑΦΜ EL123456789</p>
        </div>
        <div className="flex items-center gap-2.5 pt-px">
          <div className="flex h-[30px] items-center rounded-full border border-[#e6eaf1] bg-[#fafbfd] px-px text-[11px]">
            <button type="button" className="h-[26px] rounded-full bg-white px-[11px] font-bold text-[#161b33]">Χάρτης</button>
            <button type="button" className="h-[26px] px-2.5 font-semibold text-[#757c8d]">Προηγούμενο</button>
          </div>
          <button type="button" className="h-[37px] rounded-sm bg-[#1d3fb0] px-[15px] text-sm text-[#eef2ff]">Προσθήκη κλάδου</button>
        </div>
      </header>

      <MapPanel />

      <div className="mt-[79px] grid grid-cols-[621fr_497fr] gap-[18px]">
        <section className={cardClass}>
          <div className="flex items-center justify-between leading-[18px]">
            <h2 className="text-[13px] font-bold text-[#12172f]">Ημερολόγιο δόσεων &amp; ανανεώσεων</h2>
            <span className="text-[11px] text-[#7b8291]">3 επερχόμενες</span>
          </div>
          <h3 className="mt-3.5 text-[11px] leading-4 font-semibold tracking-wide text-[#747b8b]">ΙΑΝΟΥΑΡΙΟΣ 2027</h3>
          <ul className="mt-3.5 flex flex-col gap-[18px]">
            {payments.map((p) => (
              <li key={p.title} className="flex items-center">
                <div className="h-[42px] w-[39px] rounded-[10px] bg-[#e7edfd] pt-1 text-center text-[#2342a4]">
                  <p className="text-base leading-[18px] font-bold">01</p>
                  <p className="mt-0.5 text-[9px] leading-3 font-medium">ΙΑΝ</p>
                </div>
                <span className="ml-[11px] flex h-[27px] w-[27px] items-center justify-center rounded-lg bg-[#ececed]"><SeatIcon /></span>
                <div className="ml-2.5 flex-1">
                  <p className="text-xs leading-[15px] font-semibold text-[#12172f]">{p.title}</p>
                  <p className="text-[10px] leading-3 text-[#7b8291]">{p.sub}</p>
                </div>
                <div className="flex flex-col items-end">
                  <span className="text-xs leading-4 font-semibold text-[#12172f]">{p.amount}</span>
                  <span className="mt-1 rounded-full bg-[#e7f9f0] px-[7px] text-[9px] leading-[14px] font-bold text-[#1c8a5a]">ανανέωση</span>
                </div>
              </li>
            ))}
          </ul>
        </section>

        <section className={cardClass}>
          <div className="flex items-center justify-between leading-[18px]">
            <h2 className="text-[13px] font-bold text-[#12172f]">Κάλυψη ανά κλάδο</h2>
            <span className="text-[11px] text-[#7b8291]">5 συμβόλαια</span>
          </div>
          <ul className="mt-[21px] flex flex-col gap-5">
            {branches.map(({ title, sub, icon: Icon, tile, count }) => (
              <li key={title} className="flex items-center">
                <span className={`flex h-[30px] w-[30px] items-center justify-center rounded-[9px] ${tile}`}><Icon /></span>
                <div className="ml-2.5 flex-1">
                  <p className="text-xs leading-[15px] font-semibold text-[#12172f]">{title}</p>
                  <p className="text-[10px] leading-3 text-[#7b8291]">{sub}</p>
                </div>
                <span className={`flex h-5 w-[23px] items-center justify-center rounded-md text-[11px] font-semibold ${count}`}>1</span>
                <ChevronRight className="ml-[7px] h-3.5 w-3.5 text-[#c4c8d1]" />
              </li>
            ))}
          </ul>
        </section>
      </div>
    </div>
  </main>
);

export default function App() {
  return (
    <div className="flex h-screen flex-col overflow-hidden bg-white pt-0.5 font-['Inter',sans-serif]">
      <div className="relative mx-[89px] flex min-h-0 flex-1 flex-col rounded-t-[46px] rounded-b-lg border-2 border-b-[3px] border-[#d5d8da] border-b-[#8f9297] bg-[#070809] pt-[35px] pr-[43px] pb-[39px] pl-[37px]">
        <div className="flex min-h-0 flex-1 flex-col overflow-hidden rounded-t-[10px] rounded-b-xl bg-white">
          <MenuBar />
          <Toolbar />
          <div className="flex min-h-0 flex-1">
            <Sidebar />
            <Dashboard />
          </div>
        </div>
        {/* camera notch hangs from the bezel */}
        <div className="absolute top-[34px] left-1/2 h-[29px] w-[177px] -translate-x-1/2 rounded-b-xl bg-[#070809] pt-[9px]">
          <div className="mx-auto h-2.5 w-2.5 rounded-full bg-radial from-[#3a3860] to-[#11121d]" />
        </div>
      </div>
      <div className="mx-[91px] h-[9px] shrink-0 bg-linear-to-b from-[#37393d] to-[#55585c]" />
      <div className="h-[26px] shrink-0 rounded-b-[100px_26px] bg-linear-to-b from-[#dde1e5] via-[#b9bdc6] to-[#83858e]">
        <div className="mx-auto h-[9px] w-[277px] rounded-b-[10px] bg-linear-to-r from-[#8f9297] via-[#b4b7bc] to-[#8f9297]" />
      </div>
      <div className="flex h-[5px] shrink-0 justify-between px-[54px]">
        <div className="w-[115px] rounded-b-md bg-[#5b5d67]" />
        <div className="w-[115px] rounded-b-md bg-[#5b5d67]" />
      </div>
    </div>
  );
}
